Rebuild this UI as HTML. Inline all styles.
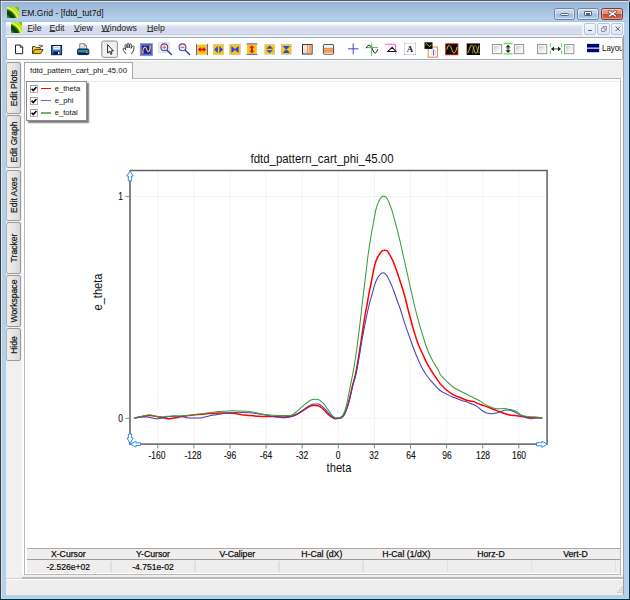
<!DOCTYPE html>
<html><head><meta charset="utf-8"><title>EM.Grid - [fdtd_tut7d]</title>
<style>
*{box-sizing:border-box}
html,body{margin:0;padding:0;background:#fff}
body{width:630px;height:600px;overflow:hidden;position:relative;font-family:"Liberation Sans",sans-serif;color:#000}
.a{position:absolute}
.t{position:absolute;white-space:nowrap;line-height:1}
#win{left:0;top:0;width:630px;height:600px;border-radius:3px 3px 0 0;overflow:hidden;background:#b6d0ea}
#title{left:0;top:0;width:630px;height:22px;background:linear-gradient(#98b4d4 0,#9ab6d6 3px,#b6d1eb 20px,#a8c4e4 21px)}
#menu{left:6px;top:21.5px;width:618px;height:13px;background:linear-gradient(#fff 0,#fff 1.5px,#eef1fa 3px,#dce1f2 4.5px,#d5dbee 7px,#d6dcef 11px,#e4e8f4 13px)}
#client{left:6px;top:34.5px;width:618px;height:560px;background:#f0f0f0}
.mi{font-size:8.7px;top:24.2px;transform-origin:0 0;color:#1a1a1a}
.mi u{text-decoration:underline;text-decoration-thickness:.8px;text-underline-offset:.2px;text-decoration-color:#333}
#toolbar{left:6px;top:36.6px;width:617px;height:23px;background:#fff;border:1px solid #a3abb8;border-left-color:#aeb4c0;border-right-color:#b4bac4;border-radius:1.5px}
.vtab{left:6.3px;width:15.2px;border:1px solid #9a9a9a;border-left-color:#b4b4b4;border-radius:2.5px;background:linear-gradient(90deg,#eeeeee,#e4e4e4 60%,#d6d6d6)}
.vt{position:absolute;left:50%;top:50%;white-space:nowrap;font-size:8.6px;line-height:10px;-webkit-text-stroke:.2px #222;transform:translate(-50%,-50%) rotate(-90deg);color:#111}
#doc{left:23.5px;top:77.5px;width:597.5px;height:497.5px;background:#fff;border:1px solid #b8b8c0}
.cb{width:8.2px;height:8.2px;border:.9px solid #b4b4b4;border-top-color:#a0a0a0;border-left-color:#a0a0a0;background:#fff}
.hc{font-size:8.7px;top:549.6px;transform:translateX(-50%);-webkit-text-stroke:.25px #222}
.vc{font-size:8.6px;top:562.6px;transform:translateX(-50%);-webkit-text-stroke:.2px #222}
.xl{font-size:10.6px;top:449.7px;transform:translateX(-50%) scaleX(.8);color:#111;-webkit-text-stroke:.15px #222}
</style></head><body>
<div class="a" style="left:0;top:0;width:3px;height:3px;background:#000080"></div>
<div id="win" class="a">
 <div id="title" class="a"></div>
 <!-- frame edges -->
 <div class="a" style="left:0;top:0;width:630px;height:1px;background:#625a52"></div>
 <div class="a" style="left:1px;top:1px;width:628px;height:1px;background:#d3e5f8"></div>
 <div class="a" style="left:0;top:0;width:1px;height:600px;background:linear-gradient(#75706a,#3c3c3c 120px)"></div>
 <div class="a" style="left:1px;top:2px;width:1px;height:597px;background:#e4eefa;opacity:.7"></div>
 <div class="a" style="left:629px;top:0;width:1px;height:600px;background:#0c2c3a"></div>
 <div class="a" style="left:628px;top:2px;width:1px;height:597px;background:#9fe0ff"></div>
 <div class="a" style="left:0;top:599px;width:630px;height:1px;background:#0c2c3a"></div>
 <div class="a" style="left:1px;top:598px;width:628px;height:1px;background:#9fe0ff"></div>

 <!-- title icon + text -->
 <svg class="a" style="left:7px;top:7px" width="12" height="11.4" viewBox="0 0 12 12" preserveAspectRatio="none"><defs><radialGradient id="lg1" gradientUnits="userSpaceOnUse" cx="-4" cy="15.5" r="22"><stop offset="0" stop-color="#8aa63c"/><stop offset=".33" stop-color="#5c7e22"/><stop offset=".4" stop-color="#0c4a0a"/><stop offset=".54" stop-color="#0a4208"/><stop offset=".61" stop-color="#2f8a12"/><stop offset=".66" stop-color="#d8f030"/><stop offset=".71" stop-color="#f6fa48"/><stop offset=".77" stop-color="#a8d818"/><stop offset=".83" stop-color="#d4f040"/><stop offset=".88" stop-color="#86c408"/><stop offset="1" stop-color="#7cbc00"/></radialGradient></defs><rect width="12" height="12" fill="url(#lg1)"/></svg>
 <div class="t" style="left:21.5px;top:8.5px;font-size:8.6px;color:#111">EM.Grid - [fdtd_tut7d]</div>

 <!-- caption buttons -->
 <div class="a" style="left:553.8px;top:7.5px;width:21.3px;height:12px;border:1px solid #6f84a4;border-radius:2.5px;background:linear-gradient(#cfdef0 0,#bccfe8 48%,#a3bcdc 52%,#b7cde8 100%);box-shadow:inset 0 0 0 1px rgba(255,255,255,.45)"></div>
 <div class="a" style="left:560.4px;top:13.1px;width:8.6px;height:3.1px;background:#fdfdfd;border:.8px solid #55657e;border-radius:1.5px"></div>
 <div class="a" style="left:577.3px;top:7.5px;width:21.6px;height:12px;border:1px solid #6f84a4;border-radius:2.5px;background:linear-gradient(#cfdef0 0,#bccfe8 48%,#a3bcdc 52%,#b7cde8 100%);box-shadow:inset 0 0 0 1px rgba(255,255,255,.45)"></div>
 <div class="a" style="left:584.4px;top:10.8px;width:7.6px;height:5.6px;background:#fdfdfd;border:.8px solid #55657e;border-radius:1px"></div>
 <div class="a" style="left:586.2px;top:12.7px;width:4px;height:1.8px;background:#7f9cc4;border:.5px solid #55657e"></div>
 <div class="a" style="left:600.8px;top:7.5px;width:22.3px;height:12px;border:1px solid #7a3a32;border-radius:2.5px;background:linear-gradient(#e8a898 0,#dd8a78 48%,#c84a30 52%,#d8684a 100%);box-shadow:inset 0 0 0 1px rgba(255,255,255,.35)"></div>
 <svg class="a" style="left:606.5px;top:10px" width="11" height="8" viewBox="0 0 11 8"><path d="M2.3,1.6 L8.5,6 M8.5,1.6 L2.3,6" stroke="#6a4444" stroke-width="2.8" stroke-linecap="round"/><path d="M2.3,1.6 L8.5,6 M8.5,1.6 L2.3,6" stroke="#fff" stroke-width="1.5" stroke-linecap="round"/></svg>

 <!-- menu bar -->
 <div id="menu" class="a"></div>
 <div id="client" class="a"></div>
 <div class="a" style="left:6px;top:34.5px;width:618px;height:2px;background:#eef2f8"></div>
 <div class="a" style="left:6px;top:34px;width:618px;height:1px;background:#c3cbdb"></div>
 <svg class="a" style="left:10.8px;top:22.1px" width="11.4" height="11.4" viewBox="0 0 12 12" preserveAspectRatio="none"><rect width="12" height="12" fill="url(#lg1)"/></svg>
 <div class="t mi" style="left:27.5px"><u>F</u>ile</div>
 <div class="t mi" style="left:49.5px"><u>E</u>dit</div>
 <div class="t mi" style="left:74px"><u>V</u>iew</div>
 <div class="t mi" style="left:101.5px"><u>W</u>indows</div>
 <div class="t mi" style="left:147px"><u>H</u>elp</div>
 <!-- mdi buttons -->
 <div class="a" style="left:582px;top:21.5px;width:42px;height:13px;background:#f2f5fb"></div>
 <div class="a" style="left:583.7px;top:22.6px;width:12px;height:12px;border:1px solid #b9c5d8;border-radius:2px;background:linear-gradient(#f4f7fc,#dde6f4)"></div>
 <div class="a" style="left:587.5px;top:30px;width:4.4px;height:1.3px;background:#5a6478"></div>
 <div class="a" style="left:597.2px;top:22.6px;width:12.4px;height:12px;border:1px solid #b9c5d8;border-radius:2px;background:linear-gradient(#f4f7fc,#dde6f4)"></div>
 <svg class="a" style="left:600.5px;top:25.5px" width="6" height="6" viewBox="0 0 6 6"><path d="M2,1.9V.5H5.5V4H4M.5,2H4V5.5H.5Z" fill="none" stroke="#76809a" stroke-width=".8"/></svg>
 <div class="a" style="left:611px;top:22.6px;width:12.2px;height:12px;border:1px solid #b9c5d8;border-radius:2px;background:linear-gradient(#f4f7fc,#dde6f4)"></div>
 <svg class="a" style="left:614.5px;top:26.3px" width="6" height="6" viewBox="0 0 6 6"><path d="M.6,.6L5,5M5,.6L.6,5" stroke="#5a6478" stroke-width="1"/></svg>

 <!-- toolbar -->
 <div id="toolbar" class="a"></div>
 <svg class="a" style="left:0;top:36px" width="630" height="26" viewBox="0 36 630 26">
 <!-- new -->
 <path d="M15.5,45 H20.5 L22.7,47.2 V53.7 H15.5 Z" fill="#fff" stroke="#222" stroke-width="1"/>
 <path d="M20.3,45 V47.4 H22.7" fill="none" stroke="#222" stroke-width=".8"/>
 <!-- open -->
 <path d="M32.5,53.5 V46.6 H35.3 L36.2,47.6 H40.2 V49.4" fill="#f6d44a" stroke="#3a3000" stroke-width=".9"/>
 <path d="M32.5,53.6 L34.8,49.6 H43.2 L40.6,53.6 Z" fill="#f2c21c" stroke="#3a3000" stroke-width=".9"/>
 <path d="M38.5,45.6 Q40.5,44.4 41.8,46.2 M42.2,44.8 V46.6 H40.4" fill="none" stroke="#222" stroke-width=".8"/>
 <!-- save -->
 <rect x="51.6" y="45.5" width="10" height="9.2" fill="#2a7ee4" stroke="#0c1c48" stroke-width="1"/>
 <rect x="53.3" y="46" width="6.6" height="3.6" fill="#f4f6fa"/>
 <path d="M54.6,47.6H58.6" stroke="#a8aab0" stroke-width=".7"/>
 <rect x="53.3" y="51.6" width="6.8" height="2.8" fill="#10182c"/>
 <rect x="58" y="52" width="1.4" height="2.2" fill="#fff"/>
 <!-- print -->
 <path d="M79.8,49.2 V43.8 H84.4 L86.6,45.8 V49.2 Z" fill="#fff" stroke="#555" stroke-width=".8"/>
 <path d="M84.2,43.9 V46 H86.5" fill="none" stroke="#666" stroke-width=".7"/>
 <path d="M81.4,46.4H83.4M81.4,47.8H85" stroke="#b0b0b0" stroke-width=".7"/>
 <rect x="77.5" y="49" width="11.3" height="5.6" rx="1.2" fill="#1e50c4" stroke="#0a1648" stroke-width=".9"/>
 <rect x="78" y="50.1" width="10.3" height="1.7" fill="#2aa86a"/>
 <rect x="78" y="53.1" width="10.3" height="1.2" fill="#0a1438"/>
 <rect x="86" y="52" width="1.4" height=".8" fill="#d0d8f0"/>
 <!-- pressed btn + arrow -->
 <rect x="101.8" y="41" width="15.6" height="16.4" rx="2" fill="#f1f1f1" stroke="#8c8c8c" stroke-width="1"/>
 <path d="M107.6,44.6 V53 L109.4,51.4 L110.8,54.4 L112,53.8 L110.7,51 H113.4 Z" fill="#fff" stroke="#111" stroke-width=".9" stroke-linejoin="round"/>
 <!-- hand -->
 <path d="M125.8,53.6 Q124.4,51.6 123.4,50.4 Q122.6,48.8 123.4,48.2 Q124.2,47.8 124.8,48.6 L125.8,49.8 L125,45.8 Q125,44.5 125.8,44.5 Q126.5,44.5 126.7,45.6 L127.2,48 L127.3,44.2 Q127.5,43.2 128.2,43.2 Q129,43.2 129,44.2 L129.1,48 L129.7,44.6 Q130,43.7 130.7,43.8 Q131.4,44 131.3,45 L131.2,48.4 L132.2,46.6 Q132.8,45.6 133.6,46 Q134.3,46.5 134,47.6 L133.6,50 Q133,52 131.6,53.9" fill="#fff" stroke="#2a2a2a" stroke-width=".85" stroke-linejoin="round" stroke-linecap="round"/>
 <!-- blue select -->
 <rect x="140.5" y="43.8" width="11.8" height="11.6" fill="#1420b0" stroke="#8890ea" stroke-width="1.3"/>
 <rect x="141.8" y="45.1" width="9.2" height="9" fill="none" stroke="#b8bcd8" stroke-width=".45"/>
 <path d="M142.6,52.8 Q143.4,47 144.9,47.2 Q146,47.4 146.8,49.6 Q147.8,52.2 148.8,51.6 Q149.8,50.8 150.2,46.6" fill="none" stroke="#f2cc20" stroke-width="1.2"/>
 <g fill="#f2cc20"><rect x="149.4" y="45.8" width="1.6" height="1.2"/><rect x="142" y="52.2" width="1.6" height="1.2"/></g>
 <!-- zoom + -->
 <rect x="158.8" y="42.8" width="10.4" height="9.4" fill="#f4f4f6" stroke="#d0d0d4" stroke-width=".8"/>
 <path d="M167,50.2 L171.4,54.6" stroke="#2a3ad0" stroke-width="1.4" stroke-linecap="round"/>
 <circle cx="164.3" cy="47.3" r="3.4" fill="#fdebd8" stroke="#3a48d4" stroke-width="1.1"/>
 <path d="M162.4,47.3H166.2M164.3,45.4V49.2" stroke="#f07818" stroke-width="1.2"/>
 <!-- zoom - -->
 <path d="M185.2,50.2 L189.6,54.6" stroke="#2a3ad0" stroke-width="1.4" stroke-linecap="round"/>
 <circle cx="182.5" cy="47.3" r="3.4" fill="#fdebd8" stroke="#3a48d4" stroke-width="1.1"/>
 <path d="M180.6,47.3H184.4" stroke="#f07818" stroke-width="1.2"/>
 <!-- yellow 1 -->
 <rect x="196.5" y="44.5" width="11" height="10.2" fill="#f8c714"/>
 <path d="M196.5,44V55.2M207.5,44V55.2" stroke="#5464dc" stroke-width="1"/>
 <path d="M197.8,49.5 L200.6,46.9 V48.4 H203.4 V46.9 L206.2,49.5 L203.4,52.1 V50.6 H200.6 V52.1 Z" fill="#d81414"/>
 <!-- yellow 2 -->
 <rect x="213.4" y="44.6" width="10.3" height="10" fill="#f8c714" stroke="#d8c078" stroke-width=".6"/>
 <path d="M214.1,49.5 L217.8,46.1 V52.9 Z M223.2,49.5 L219.4,46.1 V52.9 Z" fill="#2846e0"/>
 <!-- yellow 3 -->
 <rect x="229.8" y="44.6" width="10.4" height="10" fill="#f8c714" stroke="#c8b890" stroke-width=".7"/>
 <path d="M231.4,45.9 L235.6,49.5 L231.4,53.1 Z M238.6,45.9 L234.4,49.5 L238.6,53.1 Z" fill="#2846e0"/>
 <!-- yellow 4 -->
 <rect x="247" y="43.8" width="9.9" height="10.6" fill="#f8c714"/>
 <path d="M246.5,43.8H257.4M246.5,54.4H257.4" stroke="#5464dc" stroke-width="1"/>
 <path d="M251.9,45.2 L254.6,47.7 H252.9 V50.7 H254.6 L251.9,53.2 L249.2,50.7 H250.9 V47.7 H249.2 Z" fill="#d81414"/>
 <!-- yellow 5 -->
 <rect x="264.8" y="44.6" width="9.8" height="9.6" fill="#f8c714" stroke="#d8c078" stroke-width=".6"/>
 <path d="M269.65,45.5 L273.1,48.8 H266.2 Z M269.65,53.3 L273.1,50.2 H266.2 Z" fill="#2846e0"/>
 <!-- yellow 6 -->
 <rect x="281.6" y="44.6" width="9.5" height="9.6" fill="#f8c714" stroke="#c8b890" stroke-width=".7"/>
 <path d="M282.8,45.9 H289.8 L286.3,50 Z M282.8,52.9 H289.8 L286.3,49 Z" fill="#2846e0"/>
 <!-- grid 1 -->
 <defs><linearGradient id="gg" x1="0" y1="0" x2="0" y2="1"><stop offset="0" stop-color="#fafafa"/><stop offset="1" stop-color="#d8d8d8"/></linearGradient></defs>
 <rect x="302.5" y="44.6" width="9.6" height="9.4" fill="url(#gg)" stroke="#333" stroke-width="1"/>
 <rect x="308.6" y="45.1" width="3" height="8.4" fill="#f4a868"/>
 <path d="M307.4,45.1V53.6" stroke="#f08838" stroke-width=".9"/>
 <path d="M305.2,45.1V53.6" stroke="#e8e8e8" stroke-width=".8"/>
 <!-- grid 2 -->
 <rect x="323.4" y="44.6" width="10.2" height="9.6" rx=".6" fill="#fbfbfb" stroke="#4a4a4a" stroke-width="1"/>
 <rect x="324" y="47.1" width="9" height="1" fill="#cfe6f8"/>
 <rect x="324" y="48.1" width="9" height="4.6" fill="#f4ae78"/>
 <path d="M324,48.5H333M324,50.4H333M324,52.3H333" stroke="#ee8a3c" stroke-width=".9"/>
 <rect x="324.4" y="52.8" width="8.2" height=".9" fill="#f6e6da"/>
 <!-- plus -->
 <path d="M348,48.8H358.4M353.2,43.4V54.2" stroke="#4848c8" stroke-width="1"/>
 <!-- wave cursor -->
 <path d="M365.8,47.6H378M371.7,43.2V56" stroke="#3cc05a" stroke-width=".95"/>
 <path d="M366.2,48.2 Q367.6,45 369,45.1 Q370.4,45.3 371.7,47.6 Q373.2,51.2 374.2,52.6 Q375.2,53.8 376.2,52.4 Q377.2,51 377.8,49.2" fill="none" stroke="#222" stroke-width="1"/>
 <rect x="371" y="46.9" width="1.5" height="1.5" fill="#f08020"/>
 <!-- magenta -->
 <path d="M384.9,44.3H395.6V50.6" fill="none" stroke="#ff58f0" stroke-width="1"/>
 <path d="M395.6,50.6V54.8" stroke="#ff58f0" stroke-width="1" stroke-dasharray="1.2 1"/>
 <path d="M392.2,47.3 L396,51.4 H387.8 Z" fill="none" stroke="#151515" stroke-width="1.05"/>
 <!-- A -->
 <rect x="404.5" y="43.3" width="11" height="11.1" fill="#fff" stroke="#d2d2d4" stroke-width=".8"/><g fill="#9a9a9a"><rect x="404.1" y="42.9" width=".9" height=".9"/><rect x="415" y="42.9" width=".9" height=".9"/><rect x="404.1" y="54" width=".9" height=".9"/><rect x="415" y="54" width=".9" height=".9"/></g>
 <text x="410" y="52.2" style="font-family:'Liberation Serif',serif;font-weight:bold;font-size:8.8px" text-anchor="middle" fill="#1a1a30">A</text>
 <!-- black wave + orange -->
 <rect x="428.2" y="47" width="9.2" height="10.2" fill="#fff" stroke="#f08838" stroke-width="1"/>
 <path d="M432,49.6V55.4M435.2,49.6V55.4" stroke="#c4caf2" stroke-width=".8"/><path d="M433.6,49.4V55.6" stroke="#4c5ce0" stroke-width=".9"/>
 <rect x="424.5" y="42.3" width="8" height="6.6" fill="#0a0a0a"/>
 <path d="M425.4,45 Q426.6,43 427.8,44.8 Q429,47.6 430.4,46 L431.6,44.6" fill="none" stroke="#e6c820" stroke-width=".9"/>
 <!-- red bordered wave -->
 <rect x="445.7" y="43.8" width="12.2" height="11" fill="#0a0a0a" stroke="#d01818" stroke-width=".85"/>
 <path d="M446.8,49.6 Q447.8,44.6 449.6,45.4 Q450.8,46 451.8,49.4 Q453,53.6 454.4,53 Q456,52.2 457,47" fill="none" stroke="#dcc020" stroke-width=".95"/>
 <!-- black wave 2 -->
 <rect x="466.7" y="43.4" width="13.3" height="11.6" fill="#0a0a0a"/>
 <path d="M472.6,53.6 Q473.4,45.6 475.2,45.6 Q476.8,45.6 477.4,50 Q478,53.8 479.6,52.6" fill="none" stroke="#9a9a9a" stroke-width=".75"/>
 <path d="M467.4,53 Q468.6,52.6 469.4,49 Q470.4,45 471.8,45.2 Q473.2,45.6 474,49.6 Q474.8,53.6 476.2,53.4 Q477.6,53 478.4,48 L479,45.4" fill="none" stroke="#dcb818" stroke-width=".95"/>
 <!-- checkboxes -->
 <defs><linearGradient id="cg" x1="0" y1="0" x2="1" y2="1"><stop offset="0" stop-color="#c2c6ca"/><stop offset=".45" stop-color="#e6e8ea"/><stop offset="1" stop-color="#ffffff"/></linearGradient></defs>
 <g fill="#f4f4f4" stroke="#8e8f8f" stroke-width=".9">
  <rect x="492.4" y="44.5" width="9.3" height="9.2"/>
  <rect x="514.4" y="44.5" width="9.3" height="9.2"/>
  <rect x="537.5" y="44.5" width="9.3" height="9.2"/>
  <rect x="564.6" y="44.5" width="9.3" height="9.2"/>
 </g>
 <g fill="url(#cg)" stroke="none">
  <rect x="494" y="46.1" width="6.1" height="6"/><rect x="516" y="46.1" width="6.1" height="6"/><rect x="539.1" y="46.1" width="6.1" height="6"/><rect x="566.2" y="46.1" width="6.1" height="6"/>
 </g>
 <!-- green vertical arrows -->
 <path d="M503.6,43.5H512.6M503.6,53.9H512.6" stroke="#5ee05e" stroke-width="1.3"/>
 <path d="M508.1,46V52" stroke="#222" stroke-width=".8"/>
 <path d="M508.1,44.7 L510.7,47.5 H505.5 Z M508.1,53 L510.7,50.2 H505.5 Z" fill="#222"/>
 <path d="M506.2,48.85H510" stroke="#444" stroke-width=".6"/>
 <!-- green horiz arrows -->
 <path d="M550.4,43.2V47.2M550.4,50.6V54.2M561.6,43.2V47.2M561.6,50.6V54.2" stroke="#5ee05e" stroke-width="1.1"/>
 <path d="M553,48.9H559" stroke="#222" stroke-width=".8"/>
 <path d="M550.9,48.9 L554,46.6 V51.2 Z M561.1,48.9 L558,46.6 V51.2 Z" fill="#222"/>
 <!-- layout -->
 <rect x="587" y="43.9" width="12.2" height="8.3" fill="#000080"/>
 <rect x="587" y="47.6" width="12.2" height="1.1" fill="#fff"/>
</svg>
<div class="a" style="left:602.3px;top:43px;width:19.5px;height:14px;overflow:hidden"><div class="t" style="left:-.5px;top:1px;font-size:8.4px;color:#111;transform-origin:0 0;transform:scaleX(.94)">Layout</div></div>


 <div class="a" style="left:6px;top:59.8px;width:617px;height:1.6px;background:#fbfbfb"></div>
 <!-- left vertical tabs -->
 <div class="a vtab" style="top:61.5px;height:52.3px"><span class="vt">Edit Plots</span></div>
 <div class="a vtab" style="top:115.3px;height:53px"><span class="vt">Edit Graph</span></div>
 <div class="a vtab" style="top:169.6px;height:51.6px"><span class="vt">Edit Axes</span></div>
 <div class="a vtab" style="top:222.3px;height:51.6px"><span class="vt">Tracker</span></div>
 <div class="a vtab" style="top:275.2px;height:52px"><span class="vt">Workspace</span></div>
 <div class="a vtab" style="top:328.4px;height:32.8px"><span class="vt">Hide</span></div>
 <div class="a" style="left:22px;top:61px;width:1.5px;height:514px;background:#fff"></div>
 <div class="a" style="left:621px;top:78px;width:2px;height:497px;background:#fff"></div>
 <div class="a" style="left:623px;top:35px;width:1px;height:560px;background:#a0a0a0"></div>

 <!-- document -->
 <div id="doc" class="a"></div>
 <div class="a" style="left:25px;top:81px;width:594px;height:1px;background:#ececec"></div>
 <!-- doc tab -->
 <div class="a" style="left:23.5px;top:61.5px;width:109px;height:17px;background:#fff;border:1px solid #a8a8b0;border-bottom:none"></div>
 <div class="t" style="left:30px;top:66.5px;font-size:7.75px;color:#111">fdtd_pattern_cart_phi_45.00</div>

 <!-- legend -->
 <div class="a" style="left:26px;top:81px;width:61px;height:39.5px;background:#fff;border:1px solid #8c8c8c;box-shadow:1.5px 1.5px 1.2px rgba(40,40,40,.6)"></div>
 <div class="a cb" style="left:29.5px;top:84.5px"></div><svg class="a" style="left:29.5px;top:84.5px" width="8" height="8" viewBox="0 0 8 8"><path d="M1.6,3.8 L3.2,5.6 L6.4,1.9" fill="none" stroke="#000" stroke-width="1.6"/></svg><div class="a" style="left:41px;top:87.6px;width:9.5px;height:1.8px;background:#ff0808"></div><div class="t" style="left:54.8px;top:84.8px;font-size:7.6px;color:#111">e_theta</div>
<div class="a cb" style="left:29.5px;top:96.8px"></div><svg class="a" style="left:29.5px;top:96.8px" width="8" height="8" viewBox="0 0 8 8"><path d="M1.6,3.8 L3.2,5.6 L6.4,1.9" fill="none" stroke="#000" stroke-width="1.6"/></svg><div class="a" style="left:41px;top:100.14999999999999px;width:9.5px;height:1.3px;background:#6868c8"></div><div class="t" style="left:54.8px;top:97.1px;font-size:7.6px;color:#111">e_phi</div>
<div class="a cb" style="left:29.5px;top:109px"></div><svg class="a" style="left:29.5px;top:109px" width="8" height="8" viewBox="0 0 8 8"><path d="M1.6,3.8 L3.2,5.6 L6.4,1.9" fill="none" stroke="#000" stroke-width="1.6"/></svg><div class="a" style="left:41px;top:112.35px;width:9.5px;height:1.3px;background:#68b868"></div><div class="t" style="left:54.8px;top:109.3px;font-size:7.6px;color:#111">e_total</div>


 <!-- chart -->
 <svg class="a" style="left:0;top:0" width="630" height="600" viewBox="0 0 630 600">
  <g stroke="#f3f3f3" stroke-width="1" fill="none">
   <path d="M157.8,172V443M193.9,172V443M230,172V443M266.1,172V443M302.2,172V443M338.3,172V443M374.4,172V443M410.5,172V443M446.6,172V443M482.7,172V443M518.8,172V443"/>
   <path d="M131,196.4H547M131,418.3H547"/>
  </g>
  <path d="M134.4,418.0 C135.6,417.8 139.1,417.1 141.7,416.7 C144.3,416.3 147.3,415.6 149.8,415.6 C152.3,415.6 154.5,416.1 156.8,416.5 C159.1,416.9 161.7,417.3 163.8,417.7 C166.0,418.1 167.8,418.8 169.7,418.8 C171.6,418.8 173.6,418.1 175.5,417.7 C177.4,417.3 179.2,416.9 181.3,416.5 C183.4,416.1 186.0,415.9 188.3,415.6 C190.6,415.3 193.4,414.9 195.3,414.8 C197.2,414.6 197.7,414.6 200.0,414.4 C202.3,414.2 206.2,413.8 209.3,413.6 C212.4,413.4 215.6,413.1 218.7,413.0 C221.8,412.9 225.3,412.9 228.0,413.0 C230.7,413.1 232.7,413.3 235.0,413.6 C237.3,413.9 239.5,414.4 242.0,414.8 C244.5,415.1 247.5,415.3 250.2,415.6 C252.9,415.9 255.8,416.2 258.3,416.3 C260.8,416.4 263.4,416.5 265.3,416.5 C267.2,416.5 268.1,416.4 270.0,416.4 C271.9,416.3 274.7,416.2 277.0,416.2 C279.3,416.1 281.7,416.1 284.0,416.1 C286.3,416.1 288.9,416.6 291.0,416.3 C293.1,416.0 294.9,415.2 296.8,414.3 C298.8,413.4 300.8,412.0 302.7,410.8 C304.6,409.6 306.9,408.0 308.5,407.1 C310.1,406.2 311.2,405.9 312.6,405.6 C314.0,405.4 315.3,405.4 316.7,405.6 C318.1,405.9 319.4,406.2 320.8,407.1 C322.1,408.0 323.4,409.5 324.8,410.8 C326.2,412.1 327.5,413.7 328.9,414.9 C330.3,416.1 331.9,417.2 333.0,417.8 C334.1,418.4 334.6,418.6 335.3,418.7 C336.1,418.8 336.4,418.6 337.5,418.4 C338.6,418.2 340.7,418.1 341.9,417.3 C343.1,416.5 343.8,415.2 344.7,413.4 C345.6,411.6 346.6,409.0 347.4,406.4 C348.2,403.8 348.9,401.3 349.8,397.7 C350.6,394.1 351.8,388.6 352.7,384.8 C353.6,381.0 354.5,379.4 355.4,375.0 C356.3,370.6 357.4,364.1 358.3,358.7 C359.2,353.2 360.1,347.4 360.9,342.3 C361.7,337.2 362.4,332.6 363.0,328.3 C363.6,324.0 364.1,320.4 364.8,316.7 C365.4,313.0 366.1,309.6 366.8,306.0 C367.5,302.4 368.0,298.9 368.7,295.2 C369.4,291.4 370.2,287.4 371.0,283.5 C371.8,279.6 372.6,275.1 373.3,271.8 C374.0,268.5 374.5,265.9 375.1,263.7 C375.7,261.5 376.3,260.1 377.1,258.4 C377.9,256.7 378.8,255.1 379.8,253.8 C380.7,252.4 381.5,251.1 382.7,250.6 C383.9,250.1 385.7,250.1 386.8,250.6 C387.8,251.1 388.2,252.3 389.1,253.8 C390.0,255.2 391.0,257.0 392.0,259.0 C393.0,261.0 393.9,263.5 394.9,266.0 C395.9,268.5 396.7,271.1 397.8,274.2 C398.9,277.3 400.1,281.0 401.3,284.7 C402.5,288.4 403.7,292.3 404.8,296.3 C405.9,300.3 406.8,304.6 407.8,308.5 C408.8,312.4 409.8,316.2 410.8,319.8 C411.7,323.4 412.7,327.0 413.7,330.3 C414.7,333.6 415.6,336.9 416.6,339.7 C417.6,342.5 418.4,344.7 419.5,347.2 C420.6,349.8 421.8,352.2 423.0,354.8 C424.2,357.4 425.0,359.7 426.6,362.6 C428.2,365.6 430.2,369.0 432.5,372.5 C434.8,376.0 437.8,380.7 440.1,383.6 C442.4,386.5 444.2,388.1 446.5,390.0 C448.8,391.9 451.6,393.9 454.1,395.2 C456.6,396.6 459.5,397.3 461.7,398.2 C463.9,399.1 465.4,399.9 467.5,400.5 C469.6,401.1 472.8,401.4 474.5,401.9 C476.2,402.4 476.4,403.0 478.0,403.6 C479.6,404.2 481.7,404.8 483.8,405.6 C485.9,406.4 488.7,407.4 490.8,408.2 C492.9,409.1 494.6,409.8 496.7,410.6 C498.8,411.4 501.6,412.6 503.7,413.3 C505.8,414.0 507.6,414.5 509.5,414.9 C511.4,415.3 513.3,415.4 515.3,415.6 C517.2,415.9 519.2,416.1 521.2,416.4 C523.2,416.7 524.9,417.0 527.0,417.2 C529.1,417.4 531.5,417.5 534.0,417.6 C536.5,417.7 540.8,417.8 542.2,417.9" fill="none" stroke="#ff0000" stroke-width="1.5" stroke-linejoin="round"/>
  <path d="M134.4,418.0 C135.6,417.9 139.5,417.2 141.7,417.1 C143.9,417.0 145.6,416.9 147.5,417.1 C149.4,417.3 151.6,418.0 153.3,418.2 C155.1,418.5 156.2,418.9 158.0,418.8 C159.8,418.7 161.9,418.1 163.8,417.7 C165.8,417.3 167.5,416.7 169.7,416.5 C171.8,416.3 174.6,416.3 176.7,416.3 C178.8,416.3 180.6,416.4 182.5,416.7 C184.4,417.0 186.2,417.7 188.3,417.9 C190.4,418.1 193.4,418.0 195.3,418.0 C197.2,418.0 198.1,418.2 200.0,418.0 C201.9,417.8 204.7,417.0 207.0,416.5 C209.3,416.0 211.7,415.5 214.0,415.1 C216.3,414.7 218.7,414.2 221.0,413.9 C223.3,413.5 225.7,413.2 228.0,413.0 C230.3,412.8 232.7,412.5 235.0,412.4 C237.3,412.3 239.5,412.3 242.0,412.4 C244.5,412.5 247.5,412.6 250.2,412.8 C252.9,413.1 255.8,413.5 258.3,413.9 C260.8,414.3 263.4,414.7 265.3,415.1 C267.2,415.5 268.1,415.7 270.0,416.1 C271.9,416.5 274.7,417.0 277.0,417.2 C279.3,417.5 281.9,417.6 284.0,417.6 C286.1,417.6 288.1,417.4 289.8,417.0 C291.6,416.6 292.8,416.3 294.5,415.5 C296.2,414.7 298.4,413.3 300.3,412.0 C302.2,410.7 304.4,408.8 306.2,407.6 C307.9,406.4 309.4,405.6 310.8,405.0 C312.2,404.4 313.6,404.2 314.9,404.1 C316.2,404.0 317.2,403.8 318.4,404.1 C319.6,404.5 320.6,405.2 321.9,406.2 C323.2,407.2 324.6,408.8 326.0,410.2 C327.4,411.7 328.8,413.6 330.1,414.9 C331.4,416.2 332.7,417.2 333.6,417.8 C334.5,418.4 334.7,418.3 335.3,418.4 C335.9,418.5 336.4,418.6 337.5,418.4 C338.6,418.2 340.9,418.1 342.1,417.3 C343.3,416.5 344.0,415.2 344.9,413.4 C345.8,411.6 346.8,409.0 347.6,406.4 C348.5,403.8 349.1,401.3 350.0,397.7 C350.9,394.1 352.0,388.6 353.0,384.8 C354.0,381.0 354.8,379.4 355.8,375.0 C356.8,370.6 357.9,364.1 358.9,358.7 C359.9,353.2 360.7,347.4 361.6,342.3 C362.5,337.2 363.4,332.6 364.2,328.3 C365.0,324.0 365.7,320.7 366.5,316.7 C367.3,312.7 368.3,308.3 369.2,304.5 C370.2,300.7 371.3,297.3 372.2,294.0 C373.1,290.7 373.9,287.2 374.7,284.7 C375.5,282.2 376.3,280.5 377.1,278.8 C377.9,277.1 378.8,275.8 379.8,274.8 C380.7,273.8 381.8,272.8 382.9,272.8 C384.0,272.8 385.2,273.6 386.2,274.8 C387.2,275.9 388.1,278.1 389.1,280.0 C390.1,281.9 391.0,284.1 392.0,286.4 C393.0,288.7 393.9,291.4 394.9,294.0 C395.8,296.6 396.7,299.2 397.7,302.0 C398.7,304.8 399.7,307.1 400.8,310.5 C401.9,313.9 403.0,318.3 404.3,322.2 C405.6,326.1 407.0,329.9 408.4,333.8 C409.8,337.7 411.2,341.9 412.5,345.5 C413.8,349.1 415.0,352.2 416.4,355.5 C417.8,358.8 419.2,362.3 420.8,365.5 C422.4,368.7 424.2,372.0 426.1,374.8 C428.1,377.6 430.3,379.9 432.5,382.4 C434.7,384.9 437.2,388.1 439.5,390.0 C441.8,391.9 444.1,392.8 446.5,394.1 C448.9,395.4 451.6,396.5 454.1,397.6 C456.6,398.7 459.5,399.7 461.7,400.5 C463.9,401.3 465.6,401.6 467.5,402.2 C469.4,402.9 471.6,403.8 473.3,404.6 C475.1,405.4 476.5,406.1 478.0,407.1 C479.5,408.1 480.6,409.6 482.1,410.6 C483.6,411.6 485.1,412.4 486.8,412.9 C488.4,413.4 490.3,413.7 492.0,413.7 C493.7,413.7 495.1,413.3 496.7,412.9 C498.2,412.5 499.8,411.7 501.3,411.2 C502.9,410.7 504.4,410.1 506.0,410.0 C507.6,409.9 509.1,410.0 510.7,410.4 C512.2,410.8 513.8,411.6 515.3,412.3 C516.8,413.1 518.4,414.1 520.0,414.9 C521.6,415.7 523.3,416.4 524.7,417.0 C526.1,417.6 527.0,417.9 528.2,418.2 C529.4,418.5 530.5,418.8 531.7,418.8 C532.9,418.7 533.5,418.1 535.2,417.9 C537.0,417.7 541.0,417.7 542.2,417.7" fill="none" stroke="#4242b2" stroke-width="1.05"/>
  <path d="M134.4,417.9 C135.6,417.6 139.1,416.8 141.7,416.3 C144.3,415.8 147.3,414.7 149.8,414.8 C152.3,414.8 154.5,416.2 156.8,416.5 C159.1,416.8 161.5,416.8 163.8,416.7 C166.1,416.6 168.3,416.0 170.8,415.9 C173.3,415.8 176.5,415.9 179.0,415.9 C181.5,415.8 183.7,415.8 186.0,415.6 C188.3,415.4 190.7,415.0 193.0,414.8 C195.3,414.5 197.3,414.2 200.0,413.9 C202.7,413.6 206.2,413.2 209.3,412.8 C212.4,412.4 215.6,411.9 218.7,411.6 C221.8,411.3 224.9,411.0 228.0,410.9 C231.1,410.8 234.2,410.8 237.3,410.9 C240.4,411.0 243.8,411.0 246.7,411.2 C249.6,411.5 252.1,411.9 254.8,412.4 C257.5,412.9 260.5,413.8 263.0,414.2 C265.5,414.6 268.1,414.7 270.0,414.9 C271.9,415.1 272.8,415.2 274.7,415.3 C276.6,415.4 279.6,415.6 281.7,415.7 C283.8,415.8 285.8,415.8 287.5,415.7 C289.2,415.6 290.6,415.6 292.2,414.9 C293.8,414.2 295.1,412.8 296.8,411.4 C298.6,409.9 300.8,407.8 302.7,406.2 C304.6,404.6 306.9,402.6 308.5,401.5 C310.1,400.4 311.3,399.9 312.6,399.5 C313.9,399.1 314.9,399.1 316.1,399.2 C317.3,399.3 318.4,399.4 319.6,400.1 C320.8,400.8 321.8,401.9 323.1,403.2 C324.4,404.6 325.8,406.7 327.2,408.5 C328.6,410.3 330.0,412.8 331.2,414.3 C332.5,415.8 333.7,416.9 334.8,417.5 C335.8,418.1 336.4,417.8 337.5,417.7 C338.6,417.6 340.4,417.7 341.6,416.7 C342.8,415.7 343.6,413.9 344.5,411.7 C345.4,409.5 346.0,406.8 346.8,403.5 C347.6,400.2 348.4,395.7 349.2,391.8 C350.0,387.9 350.6,384.8 351.5,380.2 C352.4,375.6 353.6,369.7 354.5,364.0 C355.4,358.3 356.3,352.7 357.2,345.8 C358.1,338.9 359.3,329.3 360.1,322.5 C360.9,315.7 361.2,313.1 362.1,305.0 C363.0,296.9 364.8,282.5 365.8,274.2 C366.8,265.9 367.4,260.1 368.1,255.0 C368.8,249.8 369.2,247.2 369.8,243.3 C370.4,239.4 371.1,235.6 371.8,231.7 C372.5,227.8 373.2,223.7 373.9,220.0 C374.6,216.3 375.2,212.3 375.9,209.5 C376.6,206.7 377.3,204.8 378.0,203.1 C378.7,201.3 379.4,200.1 380.1,199.0 C380.8,197.9 381.5,197.2 382.1,196.7 C382.7,196.2 383.0,196.1 383.6,196.1 C384.2,196.1 384.9,196.3 385.6,196.9 C386.3,197.5 386.9,198.4 387.6,199.6 C388.3,200.8 389.0,202.5 389.7,204.3 C390.4,206.2 391.2,208.3 392.0,210.7 C392.8,213.1 393.5,216.0 394.3,218.8 C395.1,221.6 395.9,224.6 396.7,227.6 C397.5,230.6 398.2,233.7 399.0,236.9 C399.8,240.1 400.3,242.5 401.3,246.8 C402.3,251.1 403.4,256.4 404.8,262.5 C406.2,268.6 408.1,277.1 409.5,283.5 C410.9,289.9 412.5,297.1 413.4,301.0 C414.3,304.9 414.2,304.4 414.8,307.0 C415.4,309.6 416.3,313.0 417.2,316.3 C418.1,319.6 419.1,323.5 420.1,326.8 C421.1,330.1 422.0,333.1 423.0,336.2 C424.0,339.3 424.8,342.4 425.9,345.5 C427.0,348.6 428.2,351.7 429.5,354.5 C430.8,357.3 432.2,359.9 433.6,362.5 C435.1,365.1 437.1,368.0 438.2,370.0 C439.3,372.0 438.7,372.4 440.1,374.2 C441.5,376.1 444.2,379.0 446.5,381.2 C448.8,383.5 451.6,385.9 454.1,387.7 C456.6,389.4 459.5,390.6 461.7,391.8 C463.9,392.9 465.4,393.6 467.5,394.7 C469.6,395.8 472.4,397.1 474.5,398.2 C476.6,399.3 478.8,400.2 480.3,401.1 C481.9,402.0 482.1,402.6 483.8,403.6 C485.6,404.6 488.7,406.2 490.8,407.1 C492.9,408.0 494.6,408.6 496.7,408.8 C498.8,409.1 501.6,408.5 503.7,408.6 C505.8,408.7 507.6,409.0 509.5,409.4 C511.4,409.8 513.5,410.1 515.3,410.9 C517.0,411.7 518.4,413.2 520.0,414.1 C521.6,415.0 523.2,415.7 524.7,416.1 C526.2,416.6 527.4,416.7 529.3,416.8 C531.2,416.9 534.1,416.9 536.3,417.0 C538.4,417.1 541.2,417.6 542.2,417.7" fill="none" stroke="#3a9c3a" stroke-width="1.05"/>
  <path d="M130,170.6H547.1V444" fill="none" stroke="#606060" stroke-width="1.5"/>
  <path d="M130,170V444.1H547.8" fill="none" stroke="#767676" stroke-width="1.8"/>
  <g stroke="#3aa6a6" stroke-width="1">
   <path d="M125.5,196.4H129M125.5,418.3H129"/>
   <path d="M157.8,445V448.5M193.9,445V448.5M230,445V448.5M266.1,445V448.5M302.2,445V448.5M338.3,445V448.5M374.4,445V448.5M410.5,445V448.5M446.6,445V448.5M482.7,445V448.5M518.8,445V448.5"/>
  </g>
  <!-- axis handles -->
  <g fill="#fff" stroke="#2e8ef6" stroke-width="1" stroke-linejoin="round">
  <path d="M130,171 L133.2,176 H131.7 V180.8 H128.3 V176 H126.8 Z"/>
  <path d="M547.3,444.2 L541.8,447.4 V445.8 H536.5 V442.7 H541.8 V441.1 Z"/>
  <path d="M128.4,434 H131.6 V438 H133.1 L130.1,443.6 L127,438 H128.4 Z"/>
  <path d="M140.6,442.8 V445.5 H136 V447.1 L130.4,444.2 L136,441.2 V442.8 Z"/>
  </g>
 </svg>
 <div class="t" style="left:321.8px;top:152.7px;font-size:12.3px;transform:translateX(-50%) scaleX(.93);color:#111">fdtd_pattern_cart_phi_45.00</div>
 <div class="t" style="left:338.5px;top:462px;font-size:12.4px;transform:translateX(-50%) scaleX(.9);color:#111">theta</div>
 <div class="t" style="left:98.4px;top:292.2px;font-size:12.3px;transform:translate(-50%,-50%) rotate(-90deg) scaleX(.9);color:#111">e_theta</div>
 <div class="t" style="right:507.4px;top:191.2px;font-size:10.6px;color:#111;-webkit-text-stroke:.15px #222;transform-origin:100% 50%;transform:scaleX(.8)">1</div>
 <div class="t" style="right:507.4px;top:413.1px;font-size:10.6px;color:#111;-webkit-text-stroke:.15px #222;transform-origin:100% 50%;transform:scaleX(.8)">0</div>
 <div class="t xl" style="left:157.3px">-160</div>
 <div class="t xl" style="left:193.4px">-128</div>
 <div class="t xl" style="left:229.5px">-96</div>
 <div class="t xl" style="left:265.6px">-64</div>
 <div class="t xl" style="left:301.7px">-32</div>
 <div class="t xl" style="left:338.3px">0</div>
 <div class="t xl" style="left:374.4px">32</div>
 <div class="t xl" style="left:410.5px">64</div>
 <div class="t xl" style="left:446.6px">96</div>
 <div class="t xl" style="left:482.7px">128</div>
 <div class="t xl" style="left:518.8px">160</div>

 <!-- cursor table -->
 <div class="a" style="left:26.5px;top:547.5px;width:593px;height:25.8px;background:#f0eded"></div>
 <div class="a" style="left:26.5px;top:547.7px;width:593px;height:1.3px;background:#a8a8a8"></div>
 <div class="a" style="left:26.5px;top:558.5px;width:593px;height:1.2px;background:#9c9c9c"></div>
 <div class="t hc" style="left:68.3px">X-Cursor</div><div class="t vc" style="left:68.3px">-2.526e+02</div><div class="a" style="left:110.1px;top:561px;width:1.5px;height:11px;background:#e2dfdf"></div>
<div class="t hc" style="left:153px">Y-Cursor</div><div class="t vc" style="left:153px">-4.751e-02</div><div class="a" style="left:194.2px;top:561px;width:1.5px;height:11px;background:#e2dfdf"></div>
<div class="t hc" style="left:237.3px">V-Caliper</div><div class="a" style="left:278.3px;top:561px;width:1.5px;height:11px;background:#e2dfdf"></div>
<div class="t hc" style="left:321.8px">H-Cal (dX)</div><div class="a" style="left:362.4px;top:561px;width:1.5px;height:11px;background:#e2dfdf"></div>
<div class="t hc" style="left:406.3px">H-Cal (1/dX)</div><div class="a" style="left:446.5px;top:561px;width:1.5px;height:11px;background:#e2dfdf"></div>
<div class="t hc" style="left:491px">Horz-D</div><div class="a" style="left:530.6px;top:561px;width:1.5px;height:11px;background:#e2dfdf"></div>
<div class="t hc" style="left:575.5px">Vert-D</div><div class="a" style="left:614.7px;top:561px;width:1.5px;height:11px;background:#e2dfdf"></div>


 <!-- status bar -->
 <div class="a" style="left:22px;top:577px;width:601px;height:1.5px;background:#b9b9b9"></div>
 <div class="a" style="left:6px;top:578px;width:16px;height:1px;background:#d0d0d0"></div>
 <div class="a" style="left:6px;top:578.7px;width:617px;height:1px;background:#fff"></div>
 <div class="a" style="left:6px;top:579.7px;width:617px;height:14.8px;background:#f0eded"></div>
 <svg class="a" style="left:616px;top:586px" width="8" height="8" viewBox="0 0 8 8"><g fill="#b8b8b8"><rect x="5.5" y="1" width="1.3" height="1.3"/><rect x="3.2" y="3.3" width="1.3" height="1.3"/><rect x="5.5" y="3.3" width="1.3" height="1.3"/><rect x="1" y="5.6" width="1.3" height="1.3"/><rect x="3.2" y="5.6" width="1.3" height="1.3"/><rect x="5.5" y="5.6" width="1.3" height="1.3"/></g></svg>
 <div class="a" style="left:1.5px;top:594.5px;width:627px;height:3.5px;background:#b6d0ea"></div>
</div>
</body></html>
